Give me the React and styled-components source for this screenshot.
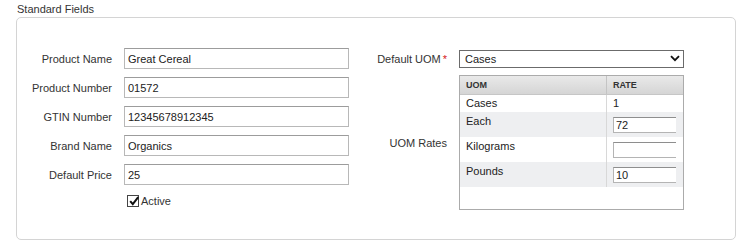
import React from "react";
import styled, { createGlobalStyle } from "styled-components";

const Global = createGlobalStyle`
  html, body { margin: 0; padding: 0; background: #fff; }
  body {
    font-family: "Liberation Sans", Arial, sans-serif;
    font-size: 11px;
    color: #333;
  }
  * { box-sizing: border-box; }
`;

const Page = styled.div`
  width: 747px;
  height: 248px;
  padding: 3px 11px 0 16px;
`;

const Title = styled.div`
  margin-left: 1px;
  line-height: 13px;
  height: 13px;
  color: #333;
`;

const Panel = styled.section`
  margin-top: 1px;
  width: 720px;
  height: 223px;
  border: 1px solid #d4d4d4;
  border-radius: 5px;
  padding-top: 30px;
  display: flex;
  align-items: flex-start;
`;

const LeftForm = styled.div`
  display: grid;
  grid-template-columns: 95px 225px;
  column-gap: 12px;
  row-gap: 8px;
  align-items: center;
`;

const Label = styled.label`
  text-align: right;
  color: #333;
  white-space: nowrap;
`;

const TextInput = styled.input`
  height: 21px;
  width: 100%;
  border: 1px solid #b8b8b8;
  border-top-color: #9c9c9c;
  padding: 0 3px;
  font: inherit;
  color: #222;
  background: #fff;
  outline: none;
`;

const CheckRow = styled.div`
  grid-column: 2;
  height: 16px;
  display: flex;
  align-items: center;
  padding-left: 3px;
  gap: 2px;
  color: #333;
`;

const CheckBox = styled.span`
  width: 12px;
  height: 12px;
  border: 1px solid #444;
  background: #fff;
  display: inline-flex;
  align-items: center;
  justify-content: center;
  position: relative;
`;

const RightForm = styled.div`
  margin-left: 11px;
  display: grid;
  grid-template-columns: 87px 225px;
  grid-template-rows: 21px auto;
  column-gap: 12px;
  row-gap: 6px;
  align-items: center;
`;

const Required = styled.span`
  color: #d42020;
  margin-left: 2px;
`;

const SelectWrap = styled.div`
  position: relative;
  height: 18px;
  margin-top: 1px;
`;

const Select = styled.select`
  appearance: none;
  -webkit-appearance: none;
  width: 100%;
  height: 18px;
  border: 1px solid #6b6b6b;
  border-radius: 0;
  background: #fff;
  padding: 0 0 0 5px;
  font: inherit;
  color: #222;
  outline: none;
`;

const Chevron = styled.svg`
  position: absolute;
  right: 4px;
  top: 5px;
  pointer-events: none;
`;

const TableBox = styled.div`
  height: 135px;
  border: 1px solid #ababab;
  background: #fff;
  overflow: hidden;
`;

const HeadRow = styled.div`
  display: grid;
  grid-template-columns: 147px 1fr;
  height: 19px;
  background: linear-gradient(#e9e9e9, #d5d5d5);
  border-bottom: 1px solid #c6c6c6;
`;

const HeadCell = styled.div`
  padding-left: 6px;
  font-size: 9px;
  font-weight: bold;
  line-height: 18px;
  color: #333;
  border-right: ${(p) => (p.$sep ? "1px solid #c4c4c4" : "none")};
`;

const BodyRow = styled.div`
  display: grid;
  grid-template-columns: 147px 1fr;
  height: ${(p) => (p.$short ? "17px" : "25px")};
  background: ${(p) => (p.$alt ? "#eeeff1" : "#fff")};
`;

const NameCell = styled.div`
  padding: ${(p) => (p.$short ? "0" : "1px")} 0 0 6px;
  line-height: 17px;
  color: #222;
  border-right: 1px solid #d8d8d8;
`;

const RateCell = styled.div`
  padding: ${(p) => (p.$short ? "0" : "5px")} 0 0 6px;
  line-height: 17px;
  color: #222;
`;

const RateClip = styled.div`
  width: 63px;
  height: 16px;
  overflow: hidden;
`;

const RateInput = styled.input`
  width: 70px;
  height: 16px;
  border: 1px solid #b4b4b4;
  border-top-color: #8e8e8e;
  padding: 0 2px;
  font: inherit;
  color: #222;
  background: #fff;
  outline: none;
  display: block;
`;

const fields = [
  ["Product Name", "Great Cereal"],
  ["Product Number", "01572"],
  ["GTIN Number", "12345678912345"],
  ["Brand Name", "Organics"],
  ["Default Price", "25"],
];

const rates = [
  { name: "Cases", value: "1", fixed: true },
  { name: "Each", value: "72" },
  { name: "Kilograms", value: "" },
  { name: "Pounds", value: "10" },
];

export default function App() {
  return (
    <>
      <Global />
      <Page>
        <Title>Standard Fields</Title>
        <Panel>
          <LeftForm>
            {fields.map(([label, value]) => (
              <React.Fragment key={label}>
                <Label>{label}</Label>
                <TextInput defaultValue={value} />
              </React.Fragment>
            ))}
            <CheckRow>
              <CheckBox>
                <svg width="12" height="12" viewBox="0 0 12 12" style={{ position: "absolute", left: 0, top: -1 }}>
                  <path d="M2.2 6.2 L4.8 9.2 L10.2 2.2" fill="none" stroke="#111" strokeWidth="2" />
                </svg>
              </CheckBox>
              <span>Active</span>
            </CheckRow>
          </LeftForm>
          <RightForm>
            <Label>
              Default UOM<Required>*</Required>
            </Label>
            <SelectWrap>
              <Select defaultValue="Cases">
                <option>Cases</option>
                <option>Each</option>
                <option>Kilograms</option>
                <option>Pounds</option>
              </Select>
              <Chevron width="10" height="7" viewBox="0 0 10 7">
                <path d="M1 1.2 L5 5.2 L9 1.2" fill="none" stroke="#111" strokeWidth="1.8" />
              </Chevron>
            </SelectWrap>
            <Label>UOM Rates</Label>
            <TableBox>
              <HeadRow>
                <HeadCell $sep>UOM</HeadCell>
                <HeadCell>RATE</HeadCell>
              </HeadRow>
              {rates.map((r, i) => (
                <BodyRow key={r.name} $short={r.fixed} $alt={i % 2 === 1}>
                  <NameCell $short={r.fixed}>{r.name}</NameCell>
                  <RateCell $short={r.fixed}>
                    {r.fixed ? (
                      r.value
                    ) : (
                      <RateClip>
                        <RateInput defaultValue={r.value} />
                      </RateClip>
                    )}
                  </RateCell>
                </BodyRow>
              ))}
            </TableBox>
          </RightForm>
        </Panel>
      </Page>
    </>
  );
}
